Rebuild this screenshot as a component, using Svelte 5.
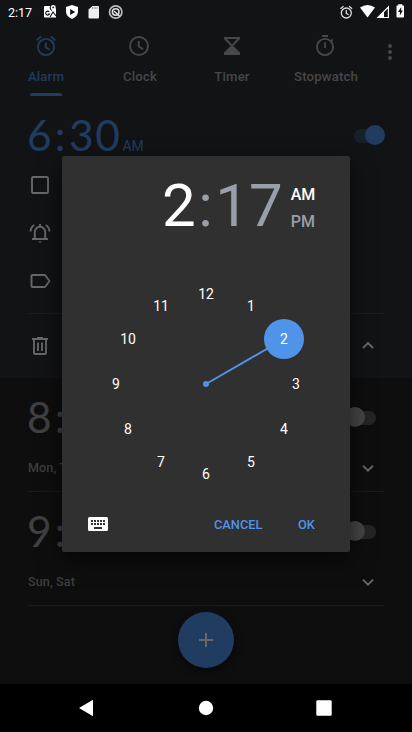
<script>
  const hours = Array.from({ length: 12 }, (_, i) => {
    const n = i + 1;
    const a = (n * Math.PI) / 6;
    return { n, x: 144 + 90 * Math.sin(a), y: 128 - 90 * Math.cos(a) };
  });
  const alarms = [
    { hour: 8, days: 'Mon, Tue' },
    { hour: 9, days: 'Sun, Sat' }
  ];
</script>

<div class="screen">
  <div class="status">
    <span class="now">2:17</span>
    <svg class="sys" width="84" height="24" viewBox="0 0 84 24">
      <path fill="#fff" d="M2 6h5a4 4 0 0 0 2 5l4-3v9.500H2q-1 0-1-1V7q0-1 1-1z" />
      <path fill="#fff" d="M10.200 5a2.500 2.500 0 0 1 2.500 2.500c0 1.600-2.500 4.400-2.500 4.400S7.700 9 7.700 7.500A2.500 2.500 0 0 1 10.200 5z" />
      <circle cx="10.200" cy="7.400" r=".9" fill="#121315" />
      <path stroke="#121315" fill="none" stroke-width="1.100" d="M7 17l3-5 3 4M6.200 11.800a2 2 0 1 0 .3 2.200H4.800" />
      <path fill="#fff" d="M29 5l6 2v4.500q0 4.500-6 7.500-6-3-6-7.500V7z" />
      <path fill="#121315" d="M27.200 9v6l5-3z" />
      <path fill="#eee" d="M49.500 6H55q1 0 1 1v10.500q0 1-1 1h-8.500q-1 0-1-1V9.500z" />
      <path stroke="#888" stroke-width="1.500" stroke-dasharray="1 .6" d="M49 8h6" />
      <circle cx="72.700" cy="12" r="6.200" fill="none" stroke="#bbb" stroke-width="1.700" />
      <circle cx="72.700" cy="12" r="3.300" fill="none" stroke="#ddd" stroke-width="1.600" />
      <path stroke="#ddd" stroke-width="1.600" d="M71 11l6 5.500" />
    </svg>
    <svg class="sys right" width="72" height="24" viewBox="0 0 72 24">
      <g fill="none" stroke="#ddd" stroke-width="1.300">
        <circle cx="12.300" cy="13" r="5" /><path d="M12.300 10v3.300l2.300 1.400M6.500 8.800l3-2.500M18.100 8.800l-3-2.500" />
      </g>
      <path fill="#fff" d="M26 7.500q7.500-5 15 0L33.500 17.500z" />
      <path fill="#fff" d="M42.500 18L55 5.500V18h-1.200V8.500L50 12.300V18z" /><path stroke="#fff" d="M49 17.500h6" />
      <path fill="#fff" d="M62.500 5.500h1.700V4.200h4.100v1.300h1.200q.5 0 .5.500v10.500q0 1-1 1h-5.500q-1 0-1-1V6q0-.5.500-.5z" />
      <path fill="#121315" d="M67.200 7l-3.200 5h1.900v3.500l3-5h-1.700z" />
    </svg>
  </div>

  <div class="tabs">
    <div class="tab active">
      <svg width="24" height="24" viewBox="0 0 24 24" fill="none" stroke="currentColor" stroke-width="1.900"><circle cx="12" cy="13" r="8.100" /><path d="M11.800 8.500v5l4 2.300M2.600 6.400l4.600-3.900M21.400 6.400l-4.600-3.900" /></svg>
      <span>Alarm</span>
    </div>
    <div class="tab clock">
      <svg width="24" height="24" viewBox="0 0 24 24" fill="none" stroke="currentColor" stroke-width="1.900"><circle cx="12" cy="12" r="9" /><path d="M11.800 7v5.500l4.300 2.600" /></svg>
      <span>Clock</span>
    </div>
    <div class="tab timer">
      <svg width="24" height="24" viewBox="0 0 24 24" fill="currentColor"><path fill-rule="evenodd" d="M4 3h16v2l-6.700 7 6.700 6.500V21H4v-2.500l6.700-6.500L4 5zm3 2l5 5.500L17 5z" /></svg>
      <span>Timer</span>
    </div>
    <div class="tab stop">
      <svg width="24" height="24" viewBox="0 0 24 24" fill="none" stroke="currentColor" stroke-width="1.900"><circle cx="12" cy="13" r="8.100" /><path d="M12 8.500v5.500M9 2h6M18 7.200l1.800-1.800" /></svg>
      <span>Stopwatch</span>
    </div>
    <svg class="more" width="24" height="24" viewBox="0 0 24 24" fill="currentColor"><circle cx="12" cy="6" r="2" /><circle cx="12" cy="12" r="2" /><circle cx="12" cy="18" r="2" /></svg>
  </div>

  <section class="open">
    <div class="line first">
      <div class="time">6<i>:</i>30<small>AM</small></div>
      <div class="switch on"><i></i></div>
    </div>
    <div class="option">
      <svg width="24" height="24" viewBox="0 0 24 24"><rect x="4" y="4" width="16" height="16" rx="1" /></svg>
    </div>
    <div class="option">
      <svg width="24" height="24" viewBox="0 0 24 24"><path d="M4 18h16M6.800 18v-7a5.200 5.200 0 0 1 10.400 0v7M12 5.500V3M2.500 10.500q.2-4.200 3.700-6.500M21.500 10.500Q21.300 6.300 17.800 4" /><path d="M10.300 20.500h3.400L12 22z" fill="currentColor" stroke="none" /></svg>
    </div>
    <div class="option">
      <svg width="24" height="24" viewBox="0 0 24 24"><path stroke-linejoin="round" d="M4 6h12.500l4.500 6-4.500 6H4q-1 0-1-1V7q0-1 1-1z" transform="translate(.5)" /></svg>
    </div>
    <div class="option foot">
      <svg width="24" height="24" viewBox="0 0 24 24"><path d="M4 5h16M9 4h6M6 5.500V19q0 1 1 1h10q1 0 1-1V5.500M10 8.500v8.500M14 8.500v8.500" /></svg>
      <svg class="chev" width="24" height="24" viewBox="0 0 24 24"><path d="M7 14l5-5 5 5" /></svg>
    </div>
  </section>

  {#each alarms as alarm}
    <section class="alarm">
      <div class="line">
        <div class="time">{alarm.hour}<i>:</i></div>
        <div class="switch"><i></i></div>
      </div>
      <div class="days"><span>{alarm.days}</span>
        <svg class="chev" width="24" height="24" viewBox="0 0 24 24"><path d="M7 9.700l5 5 5-5" /></svg>
      </div>
    </section>
  {/each}

  <div class="bottom">
    <div class="fab"><svg width="24" height="24" viewBox="0 0 24 24"><path d="M5 12h14M12 5v14" stroke="#686868" stroke-width="2" /></svg></div>
  </div>

  <div class="nav">
    <svg width="412" height="48" viewBox="0 0 412 48" fill="#fff"><path d="M79 24l14-8.300v16.600z" /><circle cx="206" cy="24" r="7.200" /><rect x="316.300" y="16.300" width="15.400" height="15.400" rx="1" /></svg>
  </div>

  <div class="dialog">
    <div class="head">
      <span class="hour">2</span><span class="colon">:</span><span class="minute">17</span>
      <div class="ampm"><b>AM</b><span>PM</span></div>
    </div>
    <svg class="face" width="288" height="256" viewBox="0 0 288 256">
      <circle cx="144" cy="128" r="3" fill="#5094e9" />
      <path d="M144 128L222 83" stroke="#5094e9" stroke-width="2" />
      <circle cx="222" cy="83" r="20" fill="#5094e9" />
      {#each hours as h}
        <text x={h.x} y={h.y + 5.3} text-anchor="middle">{h.n}</text>
      {/each}
    </svg>
    <div class="actions">
      <svg width="24" height="24" viewBox="0 0 24 24"><rect x="2" y="5" width="20" height="14" rx="1.500" fill="#fff" /><path d="M5 9h14M5 12h14" stroke="#303030" stroke-width="2" stroke-dasharray="2 1" /><path d="M8 16h8" stroke="#303030" stroke-width="2" /></svg>
      <span class="cancel">CANCEL</span><span class="ok">OK</span>
    </div>
  </div>
</div>

<style>
  :global(body) { background: #0e0e0e; }
  .screen { position: relative; width: 412px; height: 732px; overflow: hidden; background: #0e0e0e; font-family: Roboto, sans-serif; display: flex; flex-direction: column; color: #464749; }
  svg { display: block; flex: none; }
  .status { height: 24px; flex: none; display: flex; align-items: center; background: #121315; color: #fff; padding: 0 7px 0 8px; }
  .now { font-size: 12.500px; width: 35px; line-height: 24px; padding-top: 1px; box-sizing: border-box; }
  .right { margin-left: auto; }
  .sys.right { margin-right: -1px; }
  .tabs { height: 72px; flex: none; display: flex; background: #121315; font: 500 13.200px Roboto, sans-serif; }
  .tab { width: 92px; flex: none; display: flex; flex-direction: column; align-items: center; padding-top: 10px; box-sizing: border-box; position: relative; }
  .tab span { line-height: 18px; margin-top: 10px; white-space: nowrap; letter-spacing: .15px; }
  .tab.clock { width: 95px; padding-left: 1px; }
  .tab.timer { width: 90px; }
  .tab.stop { width: 98px; }
  .tab.clock svg, .tab.stop svg { margin-right: 2px; }
  .active { color: #203c60; }
  .active::after { content: ''; position: absolute; bottom: 0; left: 30px; width: 32px; height: 3px; background: #203c60; border-radius: 2px 2px 0 0; }
  .more { margin: 16px 0 0 3px; }
  .open { height: 282px; flex: none; background: #121315; color: #686868; }
  .line { height: 80px; display: flex; justify-content: space-between; padding: 0 27px 0 27px; box-sizing: border-box; align-items: center; }
  .line.first { height: 65px; padding-top: 14px; }
  .time { font: 400 42.500px/48px Lato, sans-serif; color: #404143; letter-spacing: 1.600px; white-space: nowrap; }
  .time i { font-style: normal; margin: 0 2px 0 1.500px; }
  .first .time { color: #203c60; margin-top: -2px; }
  .time small { font: 400 14px Roboto, sans-serif; letter-spacing: 0; margin-left: 1px; }
  .switch { position: relative; width: 29px; height: 14px; border-radius: 7px; background: #252525; margin-right: 9px; }
  .switch i { position: absolute; left: -2px; top: -4px; width: 20px; height: 20px; border-radius: 50%; background: #464646; }
  .alarm .time { margin-top: -2px; }
  .switch.on { background: #17202b; margin-right: 2px; }
  .switch.on i { left: 11px; top: -4px; background: #203c60; }
  .option { height: 48px; padding: 0 32px 0 28px; display: flex; justify-content: space-between; align-items: center; }
  .option svg, .chev { fill: none; stroke: currentColor; stroke-width: 1.900; }
  .foot { height: 64px; margin: 8px 28px 0; padding: 0 4px 0 0; border-top: 1px solid #1c1d1f; box-sizing: border-box; }
  .alarm { height: 114px; flex: none; box-sizing: border-box; border-bottom: 1px solid #1a1a1a; margin: 0 28px; }
  .alarm .line { margin: 0 -28px; height: 79px; }
  .days { display: flex; justify-content: space-between; height: 22px; align-items: center; padding-right: 4px; font-size: 12.600px; font-weight: 500; color: #3d3e40; }
  .days span { margin-top: -2px; letter-spacing: .1px; }
  .days .chev { color: #686868; }
  .bottom { height: 78px; flex: none; display: flex; justify-content: center; align-items: flex-start; padding-top: 6px; box-sizing: border-box; }
  .fab { width: 56px; height: 56px; border-radius: 50%; background: #203c60; display: grid; place-items: center; box-shadow: 0 4px 8px #0007; }
  .nav { height: 48px; flex: none; background: #000; }
  .dialog { position: absolute; left: 62px; top: 156px; width: 288px; height: 396px; background: #303030; border-radius: 2px; box-shadow: 0 8px 24px #0009; display: flex; flex-direction: column; color: #fff; }
  .head { height: 100px; display: flex; align-items: center; padding-left: 100px; font-size: 60px; line-height: 70px; box-sizing: border-box; }
  .colon { width: 19.500px; text-align: center; }
  .colon, .minute { color: #999fa8; }
  .ampm { display: flex; flex-direction: column; font-size: 16px; font-weight: 500; line-height: 27px; margin: 3px 0 0 8px; }
  .ampm b { font-weight: 500; }
  .ampm span { color: #999fa8; }
  .face text { font: 400 14px Roboto, sans-serif; fill: #fff; }
  .actions { display: flex; height: 24px; align-items: center; padding-left: 24px; font-size: 12.800px; font-weight: 500; color: #5094e9; }
  .cancel { margin-left: 104px; }
  .ok { margin-left: 35.500px; }
</style>
